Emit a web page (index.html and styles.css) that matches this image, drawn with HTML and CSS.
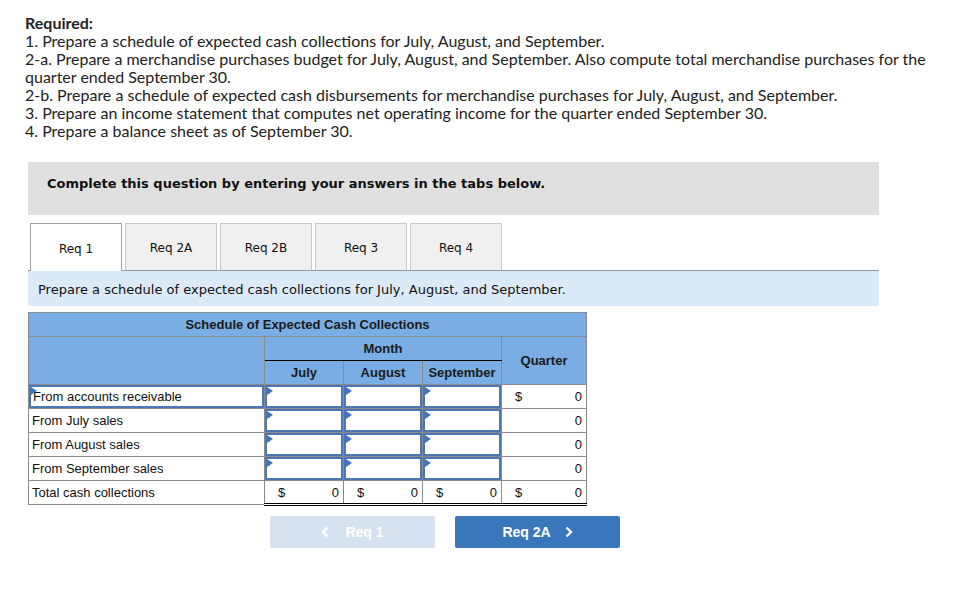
FILE: index.html
```html
<!DOCTYPE html>
<html>
<head>
<meta charset="utf-8">
<link rel="stylesheet" href="styles.css">
</head>
<body>
<div class="page">
  <div class="required">
    <div class="req-title">Required:</div>
    <div>1. Prepare a schedule of expected cash collections for July, August, and September.</div>
    <div>2-a. Prepare a merchandise purchases budget for July, August, and September. Also compute total merchandise purchases for the quarter ended September 30.</div>
    <div>2-b. Prepare a schedule of expected cash disbursements for merchandise purchases for July, August, and September.</div>
    <div>3. Prepare an income statement that computes net operating income for the quarter ended September 30.</div>
    <div>4. Prepare a balance sheet as of September 30.</div>
  </div>

  <div class="complete">Complete this question by entering your answers in the tabs below.</div>

  <div class="tabs">
    <div class="tab active">Req 1</div>
    <div class="tab">Req 2A</div>
    <div class="tab">Req 2B</div>
    <div class="tab">Req 3</div>
    <div class="tab">Req 4</div>
  </div>

  <div class="instruction">Prepare a schedule of expected cash collections for July, August, and September.</div>

  <table class="sched">
    <colgroup>
      <col class="c-label"><col class="c-mon"><col class="c-mon"><col class="c-mon"><col class="c-q">
    </colgroup>
    <tr class="h-title"><th colspan="5">Schedule of Expected Cash Collections</th></tr>
    <tr class="h-row">
      <th rowspan="2"></th>
      <th colspan="3" class="month">Month</th>
      <th rowspan="2">Quarter</th>
    </tr>
    <tr class="h-row">
      <th>July</th><th>August</th><th>September</th>
    </tr>
    <tr class="d-row">
      <td class="lbl focus"><div class="inbox"><span class="tri"></span>From accounts receivable</div></td>
      <td class="inp"><div class="inbox"><span class="tri"></span></div></td>
      <td class="inp"><div class="inbox"><span class="tri"></span></div></td>
      <td class="inp"><div class="inbox"><span class="tri"></span></div></td>
      <td class="val"><span class="dol">$</span><span class="num">0</span></td>
    </tr>
    <tr class="d-row">
      <td class="lbl">From July sales</td>
      <td class="inp"><div class="inbox"><span class="tri"></span></div></td>
      <td class="inp"><div class="inbox"><span class="tri"></span></div></td>
      <td class="inp"><div class="inbox"><span class="tri"></span></div></td>
      <td class="val"><span class="dol"></span><span class="num">0</span></td>
    </tr>
    <tr class="d-row">
      <td class="lbl">From August sales</td>
      <td class="inp"><div class="inbox"><span class="tri"></span></div></td>
      <td class="inp"><div class="inbox"><span class="tri"></span></div></td>
      <td class="inp"><div class="inbox"><span class="tri"></span></div></td>
      <td class="val"><span class="dol"></span><span class="num">0</span></td>
    </tr>
    <tr class="d-row">
      <td class="lbl">From September sales</td>
      <td class="inp"><div class="inbox"><span class="tri"></span></div></td>
      <td class="inp"><div class="inbox"><span class="tri"></span></div></td>
      <td class="inp"><div class="inbox"><span class="tri"></span></div></td>
      <td class="val"><span class="dol"></span><span class="num">0</span></td>
    </tr>
    <tr class="t-row">
      <td class="lbl">Total cash collections</td>
      <td class="val tot"><span class="dol">$</span><span class="num">0</span></td>
      <td class="val tot"><span class="dol">$</span><span class="num">0</span></td>
      <td class="val tot"><span class="dol">$</span><span class="num">0</span></td>
      <td class="val tot"><span class="dol">$</span><span class="num">0</span></td>
    </tr>
  </table>

  <div class="nav">
    <div class="btn disabled"><svg class="chev" width="8" height="12" viewBox="0 0 8 12"><path d="M6.5 1.5 L2 6 L6.5 10.5" fill="none" stroke="#fff" stroke-width="2.4"/></svg><span class="blabel">Req 1</span></div>
    <div class="btn primary"><span class="blabel">Req 2A</span><svg class="chev right" width="8" height="12" viewBox="0 0 8 12"><path d="M1.5 1.5 L6 6 L1.5 10.5" fill="none" stroke="#fff" stroke-width="2.4"/></svg></div>
  </div>
</div>
</body>
</html>
```

FILE: styles.css
```css
html, body {
  margin: 0;
  padding: 0;
  background: #fff;
}

.page {
  padding: 14px 0 0 28px;
  width: 851px;
}

.required {
  font-family: "Lato", "Open Sans", sans-serif;
  font-size: 16px;
  line-height: 18px;
  color: #222;
  margin-left: -3px;
  width: 925px;
}

.req-title {
  font-weight: bold;
}

.complete {
  margin-top: 22px;
  height: 53px;
  box-sizing: border-box;
  padding: 14px 0 0 19px;
  background: #e0e0e0;
  font-family: "DejaVu Sans", Verdana, sans-serif;
  font-weight: bold;
  font-size: 13px;
  color: #111;
}

.tabs {
  display: flex;
  gap: 3px;
  margin-top: 8px;
  padding-left: 2px;
  border-bottom: 1px solid #999;
  height: 47px;
}

.tab {
  width: 92px;
  height: 47px;
  box-sizing: border-box;
  border: 1px solid #c8c8c8;
  border-bottom: none;
  background: #f0f0f0;
  font-family: "DejaVu Sans", Verdana, sans-serif;
  font-size: 12px;
  color: #111;
  display: flex;
  align-items: center;
  justify-content: center;
  padding-top: 2px;
}

.tab.active {
  background: #fff;
  border: 1px solid #a0a0a0;
  border-bottom: none;
  height: 48px;
}

.instruction {
  height: 35px;
  box-sizing: border-box;
  padding: 11px 0 0 10px;
  background: #dbeaf8;
  font-family: "DejaVu Sans", Verdana, sans-serif;
  font-size: 13px;
  color: #111;
}

.sched {
  margin-top: 6px;
  border-collapse: collapse;
  width: 558px;
  table-layout: fixed;
  font-family: "Liberation Sans", Arial, sans-serif;
  font-size: 13px;
  color: #111;
}

.c-label { width: 236px; }
.c-mon { width: 79px; }
.c-q { width: 85px; }

.sched th {
  background: #7aade4;
  border: 1px solid #8a8a8a;
  font-weight: bold;
  color: #1a1a1a;
  padding: 0;
}

.h-title th {
  height: 23px;
  border-bottom: 1px solid #8a8a8a;
}

.h-row th {
  height: 23px;
}

.h-row th.month {
  border-bottom: 1px solid #000;
}

.sched td {
  border: 1px solid #8a8a8a;
  height: 23px;
  padding: 0;
  background: #fff;
}

.sched td.lbl {
  padding-left: 3px;
}

.sched td.lbl.focus {
  padding: 0;
}

.inbox {
  position: relative;
  box-sizing: border-box;
  height: 23px;
  border: 2px solid #4a78b6;
  display: flex;
  align-items: center;
}

.lbl.focus .inbox {
  padding-left: 2px;
}

.tri {
  position: absolute;
  left: 0;
  top: 0;
  width: 0;
  height: 0;
  border-top: 4px solid transparent;
  border-bottom: 4px solid transparent;
  border-left: 6px solid #3f74c0;
}

.sched td.val {
  padding: 0 4px 0 13px;
}

.val .dol {
  float: left;
}

.val .num {
  float: right;
}

.sched td.tot {
  border-top: 1px solid #000;
  border-bottom: 3px double #000;
  height: 22px;
}

.nav {
  display: flex;
  gap: 20px;
  margin-top: 10px;
  margin-left: 242px;
}

.btn {
  width: 165px;
  height: 32px;
  border-radius: 2px;
  display: flex;
  align-items: center;
  justify-content: center;
  font-family: "Liberation Sans", Arial, sans-serif;
  font-weight: bold;
  font-size: 14px;
  color: #fff;
}

.btn.disabled {
  background: #d6e2f1;
}

.btn.primary {
  background: #3a76bb;
}

.chev {
  margin-right: 16px;
}

.chev.right {
  margin-right: 0;
  margin-left: 14px;
}
```
